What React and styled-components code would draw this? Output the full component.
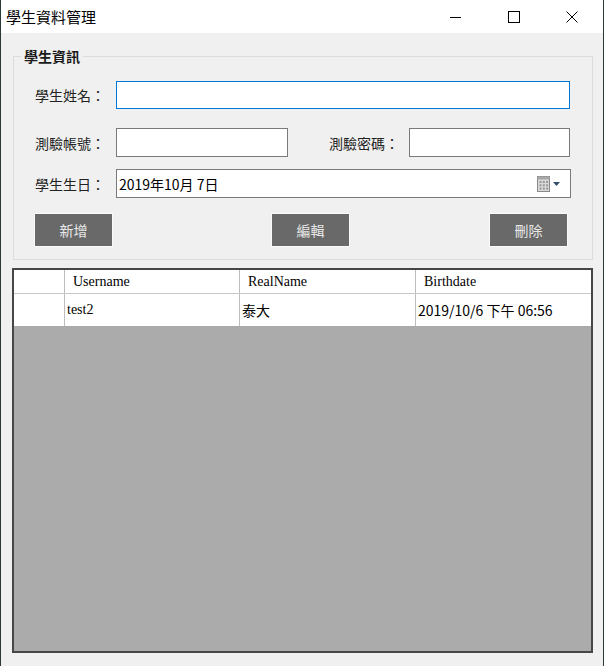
import React from 'react';
import styled, { createGlobalStyle } from 'styled-components';

const GlobalStyle = createGlobalStyle`
  * { box-sizing: border-box; }
  html, body { margin: 0; padding: 0; background: #f0f0f0; }
  body { font-family: "Noto Sans CJK TC", "Noto Sans", sans-serif; }
`;

const Window = styled.div`
  width: 604px;
  height: 666px;
  background: #f0f0f0;
  border-left: 1px solid #2b3838;
  border-right: 1px solid #2b3838;
  display: flex;
  flex-direction: column;
`;

const TitleBar = styled.div`
  height: 33px;
  background: #fff;
  display: flex;
  align-items: center;
  flex-shrink: 0;
`;

const Title = styled.div`
  flex: 1;
  padding-left: 5px;
  font-size: 15px;
  color: #000;
  line-height: 33px;
`;

const Controls = styled.div`
  display: flex;
  height: 33px;
  padding-right: 2px;
`;

const ControlButton = styled.div`
  width: 58px;
  height: 33px;
  display: flex;
  align-items: center;
  justify-content: center;
`;

const Group = styled.fieldset`
  margin: 14px 10px 0 12px;
  padding: 0 21px 12px 21px;
  border: 1px solid #dcdcdc;
  min-width: 0;
`;

const Legend = styled.legend`
  margin-left: -14px;
  padding: 0 3px;
  font-size: 14px;
  line-height: 18px;
  font-weight: 700;
  color: #1a1a1a;
`;

const Row = styled.div`
  display: flex;
  align-items: center;
  margin-top: ${p => p.$mt}px;
`;

const Label = styled.label`
  width: ${p => p.$w || 81}px;
  margin-left: ${p => p.$ml || 0}px;
  font-size: 14px;
  color: #222;
  white-space: nowrap;
`;

const TextBox = styled.input`
  width: ${p => p.$w}px;
  height: ${p => p.$h || 29}px;
  border: 1px solid ${p => (p.$focus ? '#0078d7' : '#7a7a7a')};
  background: #fff;
  outline: none;
  padding: 0 3px;
  font-family: inherit;
  font-size: 14px;
`;

const DatePicker = styled.div`
  flex: 1;
  height: 29px;
  border: 1px solid #7a7a7a;
  background: #fff;
  display: flex;
  align-items: center;
  padding: 0 9px 0 2px;
  font-size: 14px;
  color: #000;
`;

const DateText = styled.span`
  flex: 1;
`;

const ButtonRow = styled.div`
  display: flex;
  margin-top: 15px;
  margin-left: -1px;
`;

const Button = styled.button`
  width: 79px;
  height: 34px;
  margin-left: ${p => p.$ml || 0}px;
  background: #696969;
  border: 1px solid #fafafa;
  color: #e8e8e8;
  font-family: inherit;
  font-size: 14px;
  padding: 0;
`;

const Grid = styled.div`
  margin: 8px 10px 0 11px;
  height: 385px;
  border: 2px solid #464646;
  background: #ababab;
`;

const GridRow = styled.div`
  display: grid;
  grid-template-columns: 50px 175px 176px 175px;
  height: ${p => p.$h}px;
  background: #fff;
  border-bottom: 1px solid ${p => (p.$head ? '#c8c8c8' : '#a9a9a9')};
`;

const Cell = styled.div`
  border-left: ${p => (p.$first ? 'none' : '1px solid #bdbdbd')};
  padding-left: ${p => p.$pl || 2}px;
  display: flex;
  align-items: center;
  font-family: ${p => (p.$sans
    ? '"Noto Sans CJK TC", "Noto Sans", sans-serif'
    : '"Liberation Serif", "Noto Sans CJK TC", serif')};
  font-size: 14px;
  color: #000;
  white-space: nowrap;
  overflow: hidden;
`;

const CalendarIcon = () => (
  <svg width="24" height="18" viewBox="0 0 24 18">
    <rect x="0.5" y="1.5" width="12" height="15" fill="#d9d9d9" stroke="#8a8a8a" />
    <rect x="0.5" y="1.5" width="12" height="3" fill="#a8a8a8" />
    {[0, 1, 2].map(r => [0, 1, 2].map(c => (
      <rect key={`${r}-${c}`} x={2.5 + c * 3.3} y={6 + r * 3.3} width="2" height="2" fill="#9a9a9a" />
    )))}
    <path d="M16 7 L23 7 L19.5 11 Z" fill="#35506e" />
  </svg>
);

const columns = ['Username', 'RealName', 'Birthdate'];

export default function App() {
  return (
    <>
      <GlobalStyle />
      <Window>
        <TitleBar>
          <Title>學生資料管理</Title>
          <Controls>
            <ControlButton>
              <svg width="12" height="12" viewBox="0 0 12 12">
                <path d="M0 6.5 H11" stroke="#000" strokeWidth="1" />
              </svg>
            </ControlButton>
            <ControlButton>
              <svg width="12" height="12" viewBox="0 0 12 12">
                <rect x="0.5" y="0.5" width="11" height="11" fill="none" stroke="#000" />
              </svg>
            </ControlButton>
            <ControlButton>
              <svg width="12" height="12" viewBox="0 0 12 12">
                <path d="M0.5 0.5 L11.5 11.5 M11.5 0.5 L0.5 11.5" stroke="#000" strokeWidth="1" />
              </svg>
            </ControlButton>
          </Controls>
        </TitleBar>

        <Group>
          <Legend>學生資訊</Legend>
          <Row $mt={16}>
            <Label>學生姓名：</Label>
            <TextBox $w={454} $h={28} $focus />
          </Row>
          <Row $mt={19}>
            <Label>測驗帳號：</Label>
            <TextBox $w={172} />
            <Label $w={80} $ml={41}>測驗密碼：</Label>
            <TextBox $w={161} />
          </Row>
          <Row $mt={12}>
            <Label>學生生日：</Label>
            <DatePicker>
              <DateText>2019年10月 7日</DateText>
              <CalendarIcon />
            </DatePicker>
          </Row>
          <ButtonRow>
            <Button>新增</Button>
            <Button $ml={158}>編輯</Button>
            <Button $ml={139}>刪除</Button>
          </ButtonRow>
        </Group>

        <Grid>
          <GridRow $h={24} $head>
            <Cell $first />
            {columns.map(c => <Cell key={c} $pl={8}>{c}</Cell>)}
          </GridRow>
          <GridRow $h={33}>
            <Cell $first />
            <Cell>test2</Cell>
            <Cell $sans>泰大</Cell>
            <Cell $sans>2019/10/6 下午 06:56</Cell>
          </GridRow>
        </Grid>
      </Window>
    </>
  );
}
